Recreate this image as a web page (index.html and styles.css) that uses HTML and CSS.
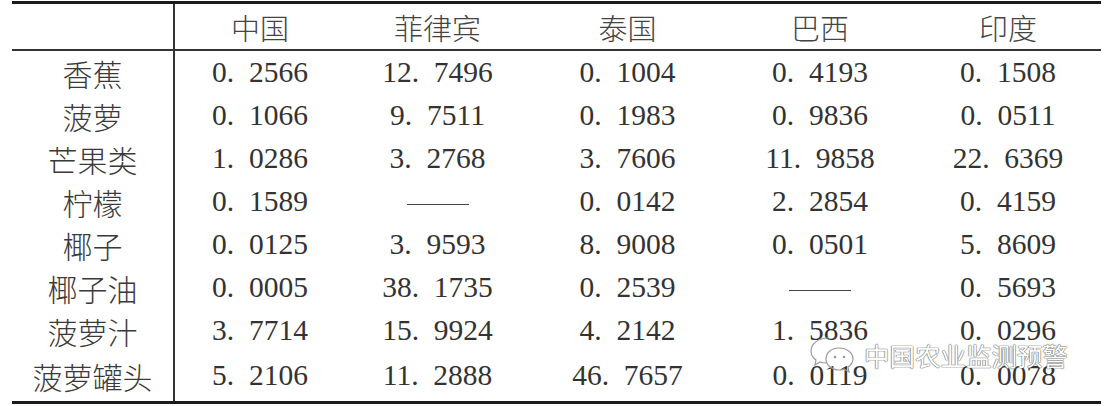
FILE: index.html
```html
<!DOCTYPE html>
<html lang="zh-CN">
<head>
<meta charset="utf-8">
<title>表格</title>
<link rel="stylesheet" href="styles.css">
</head>
<body>
<div class="page">
<table class="data">
  <colgroup>
    <col class="c0"><col class="c1"><col class="c2"><col class="c3"><col class="c4"><col class="c5">
  </colgroup>
  <thead>
    <tr><th class="label"></th><th>中国</th><th>菲律宾</th><th>泰国</th><th>巴西</th><th>印度</th></tr>
  </thead>
  <tbody>
    <tr><td class="label">香蕉</td><td>0.&#8194;2566</td><td>12.&#8194;7496</td><td>0.&#8194;1004</td><td>0.&#8194;4193</td><td>0.&#8194;1508</td></tr>
    <tr><td class="label">菠萝</td><td>0.&#8194;1066</td><td>9.&#8194;7511</td><td>0.&#8194;1983</td><td>0.&#8194;9836</td><td>0.&#8194;0511</td></tr>
    <tr><td class="label">芒果类</td><td>1.&#8194;0286</td><td>3.&#8194;2768</td><td>3.&#8194;7606</td><td>11.&#8194;9858</td><td>22.&#8194;6369</td></tr>
    <tr><td class="label">柠檬</td><td>0.&#8194;1589</td><td><span class="dash"></span></td><td>0.&#8194;0142</td><td>2.&#8194;2854</td><td>0.&#8194;4159</td></tr>
    <tr><td class="label">椰子</td><td>0.&#8194;0125</td><td>3.&#8194;9593</td><td>8.&#8194;9008</td><td>0.&#8194;0501</td><td>5.&#8194;8609</td></tr>
    <tr><td class="label">椰子油</td><td>0.&#8194;0005</td><td>38.&#8194;1735</td><td>0.&#8194;2539</td><td><span class="dash"></span></td><td>0.&#8194;5693</td></tr>
    <tr><td class="label">菠萝汁</td><td>3.&#8194;7714</td><td>15.&#8194;9924</td><td>4.&#8194;2142</td><td>1.&#8194;5836</td><td>0.&#8194;0296</td></tr>
    <tr class="last"><td class="label">菠萝罐头</td><td>5.&#8194;2106</td><td>11.&#8194;2888</td><td>46.&#8194;7657</td><td>0.&#8194;0119</td><td>0.&#8194;0078</td></tr>
  </tbody>
</table>
<div class="watermark">
  <svg class="wx" width="48" height="40" viewBox="0 0 48 40" fill="none" stroke="#9a9a9a" stroke-width="1.2">
    <path d="M20 4 C10 4 3 10 3 17 C3 21 5 24 8 26 L7 31 L12 28 C14 29 16 29 19 29"/>
    <path d="M31 14 C23 14 18 19 18 25 C18 31 24 36 31 36 C33 36 35 36 36 35 L41 38 L40 33 C43 31 45 28 45 25 C45 19 39 14 31 14 Z"/>
    <circle cx="27" cy="23" r="1.3" fill="#9a9a9a" stroke="none"/>
    <circle cx="36" cy="23" r="1.3" fill="#9a9a9a" stroke="none"/>
  </svg>
  <span class="wm-text">中国农业监测预警</span>
</div>
</div>
</body>
</html>
```
FILE: styles.css
```css
html, body {
  margin: 0;
  padding: 0;
  background: #ffffff;
}
.page {
  position: relative;
  width: 1108px;
  height: 406px;
  padding-top: 1px;
  box-sizing: border-box;
}
.data {
  margin-left: 12px;
  width: 1089px;
  border-collapse: collapse;
  table-layout: fixed;
  border-top: 3px solid #1a1a1a;
  border-bottom: 3px solid #1a1a1a;
  color: #333333;
  font-family: "Liberation Serif", "Noto Sans CJK SC", serif;
  font-size: 29.5px;
}
.c0 { width: 162px; }
.c1 { width: 171px; }
.c2 { width: 185px; }
.c3 { width: 195px; }
.c4 { width: 190px; }
.c5 { width: 186px; }
.data th {
  height: 45px;
  padding: 0;
  text-align: center;
  border-bottom: 2px solid #333333;
  font-family: "Noto Sans CJK SC", sans-serif;
  font-size: 29px;
  font-weight: 300;
  color: #444444;
  vertical-align: middle;
}
.data td {
  height: 43.1px;
  padding: 0;
  text-align: center;
  vertical-align: middle;
  line-height: 1;
}
.data .last td {
  height: 46px;
  padding-bottom: 2px;
}
.data .label {
  border-right: 2px solid #333333;
}
.data td.label {
  font-family: "Noto Sans CJK SC", sans-serif;
  font-size: 30px;
  font-weight: 300;
  color: #3a3a3a;
}
.dash {
  display: inline-block;
  width: 62px;
  height: 1.5px;
  background: #444444;
  vertical-align: middle;
}
.watermark {
  position: absolute;
  left: 808px;
  top: 334px;
  display: flex;
  align-items: center;
  gap: 8px;
}
.wm-text {
  font-family: "Noto Sans CJK SC", sans-serif;
  font-size: 25.5px;
  color: #ffffff;
  text-shadow: 0 0 1px #666, 0 0 1px #666, 0 0 1px #666;
}
```
